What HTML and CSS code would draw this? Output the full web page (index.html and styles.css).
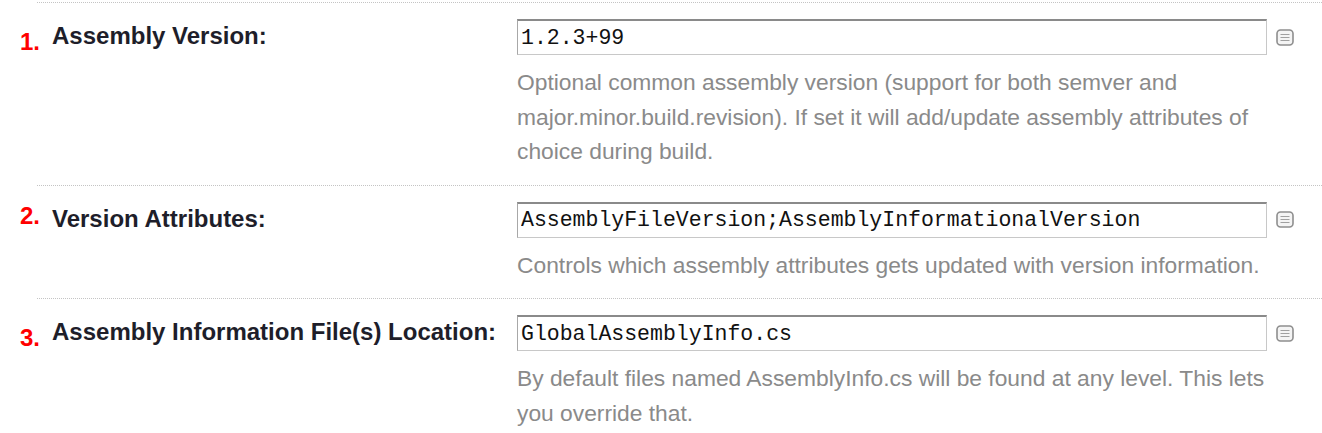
FILE: index.html
```html
<!DOCTYPE html>
<html>
<head>
<meta charset="utf-8">
<link rel="stylesheet" href="styles.css">
</head>
<body>
<div class="form">
  <div class="row">
    <div class="num num-low">1.</div>
    <div class="content">
      <div class="label">Assembly Version:</div>
      <div class="field">
        <div class="control">
          <input class="input" type="text" value="1.2.3+99" readonly>
          <svg class="help" width="18" height="17" viewBox="0 0 18 17"><rect x="1" y="1" width="16" height="15" rx="3.5" fill="#f4f4f4" stroke="#8e8e8e" stroke-width="1.6"/><path d="M4.5 5.5h9M4.5 8.5h9M4.5 11.5h9" stroke="#a0a0a0" stroke-width="1.2"/></svg>
        </div>
        <div class="desc">Optional common assembly version (support for both semver and major.minor.build.revision). If set it will add/update assembly attributes of choice during build.</div>
      </div>
    </div>
  </div>
  <div class="row">
    <div class="num">2.</div>
    <div class="content">
      <div class="label">Version Attributes:</div>
      <div class="field">
        <div class="control">
          <input class="input" type="text" value="AssemblyFileVersion;AssemblyInformationalVersion" readonly>
          <svg class="help" width="18" height="17" viewBox="0 0 18 17"><rect x="1" y="1" width="16" height="15" rx="3.5" fill="#f4f4f4" stroke="#8e8e8e" stroke-width="1.6"/><path d="M4.5 5.5h9M4.5 8.5h9M4.5 11.5h9" stroke="#a0a0a0" stroke-width="1.2"/></svg>
        </div>
        <div class="desc">Controls which assembly attributes gets updated with version information.</div>
      </div>
    </div>
  </div>
  <div class="row">
    <div class="num num-low">3.</div>
    <div class="content">
      <div class="label">Assembly Information File(s) Location:</div>
      <div class="field">
        <div class="control">
          <input class="input" type="text" value="GlobalAssemblyInfo.cs" readonly>
          <svg class="help" width="18" height="17" viewBox="0 0 18 17"><rect x="1" y="1" width="16" height="15" rx="3.5" fill="#f4f4f4" stroke="#8e8e8e" stroke-width="1.6"/><path d="M4.5 5.5h9M4.5 8.5h9M4.5 11.5h9" stroke="#a0a0a0" stroke-width="1.2"/></svg>
        </div>
        <div class="desc">By default files named AssemblyInfo.cs will be found at any level. This lets you override that.</div>
      </div>
    </div>
  </div>
</div>
</body>
</html>
```

FILE: styles.css
```css
html, body {
  margin: 0;
  padding: 0;
  background: #ffffff;
}

body {
  font-family: "Liberation Sans", Arial, sans-serif;
  overflow: hidden;
}

.form {
  padding-top: 2px;
}

.row {
  display: flex;
  align-items: flex-start;
}

.num {
  width: 37px;
  box-sizing: border-box;
  padding-left: 20px;
  padding-top: 14px;
  font-family: "Liberation Sans", Arial, sans-serif;
  font-weight: bold;
  font-size: 24px;
  line-height: 34px;
  color: #ff0000;
  white-space: nowrap;
}

.num-low {
  padding-top: 23px;
}

.content {
  flex: 1;
  display: flex;
  align-items: flex-start;
  border-top: 1px dotted #c4c4c4;
  padding-top: 16px;
  padding-bottom: 16px;
}

.label {
  width: 480px;
  box-sizing: border-box;
  padding-left: 15px;
  font-weight: bold;
  font-size: 24px;
  line-height: 34px;
  color: #1e1e2a;
  white-space: nowrap;
}

.field {
  display: flex;
  flex-direction: column;
}

.control {
  display: flex;
  align-items: center;
  gap: 9px;
}

.input {
  width: 750px;
  height: 36px;
  box-sizing: border-box;
  margin: 0;
  padding: 0 3px;
  border: 1px solid #c8c8c8;
  border-top: 2px solid #8a8a8a;
  border-left-color: #a8a8a8;
  background: #ffffff;
  font-family: "Liberation Mono", "Courier New", monospace;
  font-size: 21.5px;
  color: #111111;
  outline: none;
}

.help {
  display: block;
  flex: none;
}

.desc {
  width: 770px;
  margin-top: 10px;
  font-size: 22.8px;
  line-height: 34.5px;
  color: #8a8a8a;
}
```
